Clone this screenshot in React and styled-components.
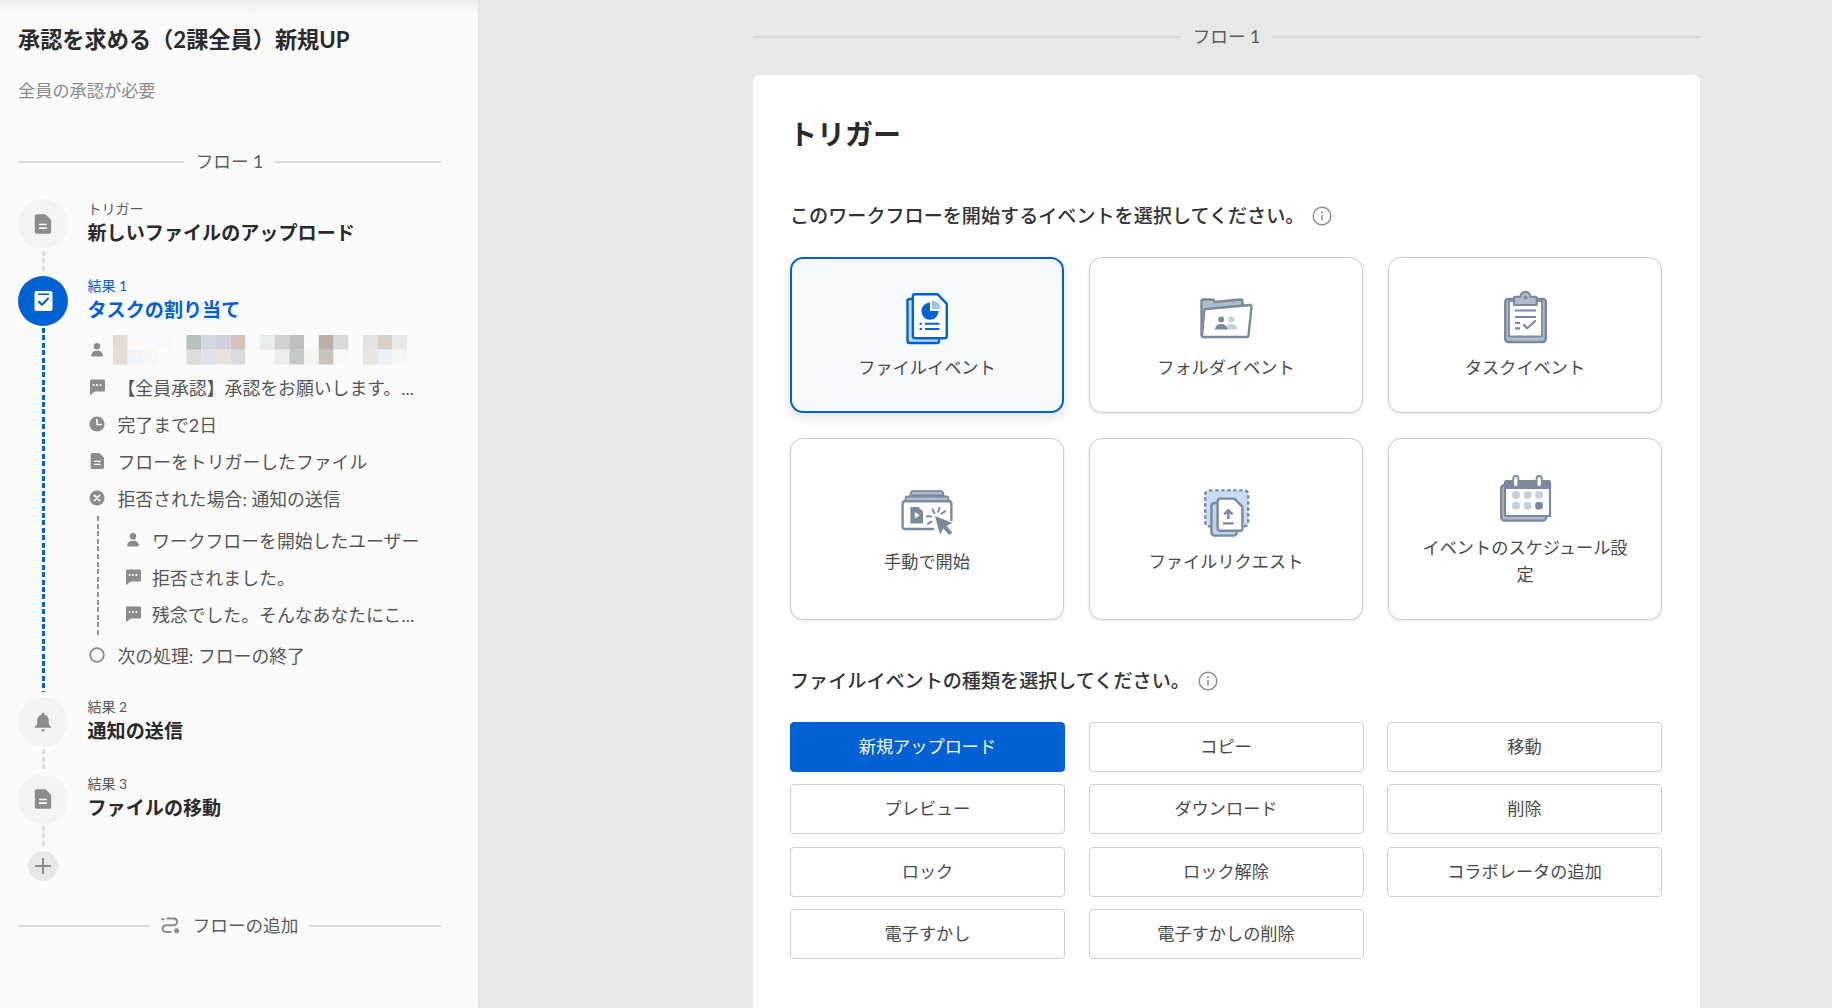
import React from "react";
import styled, { createGlobalStyle, css } from "styled-components";

const FONT = `Lato, "Noto Sans CJK JP", "Noto Sans", sans-serif`;
const BLUE = "#0061d5";
const SLATE = "#7a8a9c";
const MIST = "#c4d0dc";
const GREY = "#8c8c8c";

const Global = createGlobalStyle`
  html, body { margin: 0; height: 100%; overflow: hidden; background: #e8e8e8; }
  #root { height: 100%; }
  * { box-sizing: border-box; }
  body { font-family: ${FONT}; color: #4a4a4a; }
`;

const Page = styled.div`
  display: flex;
  width: 1832px;
  height: 1008px;
  overflow: hidden;
`;

const Sidebar = styled.aside`
  width: 478px;
  flex: none;
  padding: 25px 37px 0 18px;
  background: linear-gradient(#eeeeee 0, #fbfbfb 16px);
  box-shadow: 1px 0 2px rgba(0, 0, 0, 0.04);
`;

const Title = styled.h1`
  margin: 0;
  font-size: 22.2px;
  line-height: 30px;
  font-weight: 700;
  color: #2a2a2a;
  white-space: nowrap;
`;

const Subtitle = styled.p`
  margin: 24px 0 0;
  font-size: 17.2px;
  line-height: 24px;
  color: #8a8a8a;
`;

const Divider = styled.div`
  display: flex;
  align-items: center;
  gap: ${(p) => p.$gap || 12}px;
  height: 24px;
  font-size: 17.6px;
  line-height: 24px;
  color: #5a5a5a;
  white-space: nowrap;
  &::before, &::after {
    content: "";
    flex: 1;
    height: 2px;
    background: ${(p) => p.$line || "#dddddd"};
  }
`;

const SideDivider = styled(Divider)`
  margin: 47px 0 25px;
`;

const AddDivider = styled(Divider)`
  margin-top: 33px;
`;

const AddLabel = styled.span`
  display: inline-flex;
  align-items: center;
  gap: 13px;
`;

const Step = styled.div`
  display: flex;
  align-items: center;
  gap: 19.5px;
  height: 50px;
`;

const Circle = styled.div`
  width: 50px;
  height: 50px;
  flex: none;
  border-radius: 50%;
  display: flex;
  align-items: center;
  justify-content: center;
  background: ${(p) => (p.$active ? BLUE : "#f4f4f4")};
`;

const StepText = styled.div`
  display: flex;
  flex-direction: column;
  margin-top: -2px;
`;

const StepLabel = styled.span`
  font-size: 14px;
  line-height: 20px;
  color: ${(p) => (p.$active ? BLUE : "#5a5a5a")};
`;

const StepTitle = styled.span`
  font-size: 19.1px;
  line-height: 28px;
  font-weight: 700;
  color: ${(p) => (p.$active ? BLUE : "#2a2a2a")};
  white-space: nowrap;
`;

const Connector = styled.div`
  width: 3px;
  height: 27px;
  margin-left: 23.5px;
  padding: 2px 0 5px;
  &::before {
    content: "";
    display: block;
    height: 100%;
    background: repeating-linear-gradient(#dedede 0 5px, transparent 5px 7.5px);
  }
`;

const Expanded = styled.div`
  display: flex;
  height: 371px;
`;

const BlueRail = styled.div`
  width: 3px;
  flex: none;
  margin: 2px 0 5px 23.5px;
  background: repeating-linear-gradient(${BLUE} 0 5px, transparent 5px 7.4px);
`;

const Details = styled.div`
  flex: 1;
  min-width: 0;
  margin: 5px 0 0 43.5px;
`;

const Row = styled.div`
  display: flex;
  align-items: center;
  gap: 11.5px;
  height: 37.2px;
  font-size: 17.85px;
  color: #555555;
  white-space: nowrap;
`;

const RowIcon = styled.span`
  width: 18px;
  height: 18px;
  flex: none;
  display: flex;
`;

const Branch = styled.div`
  display: flex;
  margin: 4px 0;
`;

const GreyRail = styled.div`
  width: 2px;
  flex: none;
  margin: -5px 0 -4px 8.5px;
  background: repeating-linear-gradient(#8f8f8f 0 5px, transparent 5px 7.6px);
`;

const BranchRows = styled.div`
  margin-left: 25px;
  & > div { gap: 10.5px; }
`;

const Mosaic = styled.svg`
  display: block;
  margin-left: -5px;
`;

const AddCircle = styled.div`
  width: 30px;
  height: 30px;
  margin-left: 10px;
  border-radius: 50%;
  background: #e8e8e8;
  display: flex;
  align-items: center;
  justify-content: center;
`;

const Main = styled.main`
  flex: 1;
  padding: 25px 0 0 275px;
  min-width: 0;
`;

const Column = styled.div`
  width: 947px;
`;

const PanelCard = styled.section`
  margin-top: 26px;
  background: #ffffff;
  border-radius: 6px;
  padding: 39px 37px 60px;
  height: 1000px;
`;

const Heading = styled.h2`
  margin: 0 0 0 -1px;
  font-size: 28px;
  line-height: 40px;
  font-weight: 700;
  color: #2a2a2a;
`;

const Prompt = styled.h3`
  margin: ${(p) => p.$top}px 0 ${(p) => p.$bottom}px;
  display: flex;
  align-items: center;
  gap: 8px;
  height: 28px;
  font-size: 19.1px;
  line-height: 28px;
  font-weight: 500;
  color: #333333;
  white-space: nowrap;
`;

const CardGrid = styled.div`
  display: grid;
  grid-template-columns: repeat(3, 274px);
  grid-template-rows: 156px auto;
  column-gap: 25px;
  row-gap: 25px;
`;

const EventCard = styled.div`
  display: flex;
  flex-direction: column;
  align-items: center;
  justify-content: center;
  padding: 31px 28px;
  border-radius: 13px;
  font-size: 17.2px;
  line-height: 27px;
  text-align: center;
  color: #4a4a4a;
  background: #ffffff;
  border: 1px solid #cccccc;
  box-shadow: 0 1px 3px rgba(0, 0, 0, 0.1);
  ${(p) =>
    p.$selected &&
    css`
      padding: 30px 27px;
      background: #f7fafd;
      border: 2px solid ${BLUE};
      box-shadow: 0 4px 12px rgba(0, 0, 0, 0.12);
    `}
`;

const CardIcon = styled.svg`
  display: block;
  flex: none;
  margin-bottom: 8px;
`;

const ButtonGrid = styled.div`
  display: grid;
  grid-template-columns: repeat(3, 275px);
  column-gap: 23.5px;
  row-gap: 12.3px;
`;

const TypeButton = styled.button`
  height: 50px;
  padding: 0 0 3px;
  border-radius: 4px;
  font-family: ${FONT};
  font-size: 17.2px;
  color: ${(p) => (p.$selected ? "#ffffff" : "#4a4a4a")};
  background: ${(p) => (p.$selected ? BLUE : "#ffffff")};
  border: 1px solid ${(p) => (p.$selected ? BLUE : "#cfcfcf")};
`;

/* ---------- small glyphs ---------- */

const PersonIcon = () => (
  <svg width="18" height="18" viewBox="0 0 18 18" fill={GREY}>
    <circle cx="9" cy="5.3" r="3.2" />
    <path d="M3.2 15c0-3.4 2.2-5.2 5.8-5.2s5.8 1.8 5.8 5.2c0 .3-.2.5-.5.5H3.7c-.3 0-.5-.2-.5-.5z" />
  </svg>
);

const ChatIcon = () => (
  <svg width="18" height="18" viewBox="0 0 18 18">
    <path fill={GREY} d="M2.6 1.5h12.8c1 0 1.6.6 1.6 1.6v8.8c0 1-.6 1.6-1.6 1.6H6.8L3 16.6c-.5.4-1 .2-1-.4V3.1c0-1 .6-1.6 1.6-1.6z" />
    <circle cx="5.6" cy="7" r="1.1" fill="#fbfbfb" />
    <circle cx="9" cy="7" r="1.1" fill="#fbfbfb" />
    <circle cx="12.4" cy="7" r="1.1" fill="#fbfbfb" />
  </svg>
);

const ClockIcon = () => (
  <svg width="18" height="18" viewBox="0 0 18 18">
    <circle cx="9" cy="9" r="7.6" fill={GREY} />
    <path d="M9 4.6V9.5H13" fill="none" stroke="#fbfbfb" strokeWidth="1.7" strokeLinecap="round" />
  </svg>
);

const FileGlyph = ({ size = 18, color = GREY, hole = "#fbfbfb" }) => (
  <svg width={size * 0.82} height={size} viewBox="0 0 15 18" style={{ margin: "0 auto" }}>
    <path fill={color} d="M2.4.8h6.4c.5 0 .9.2 1.2.5l3.8 3.9c.3.3.5.7.5 1.2v9c0 1-.7 1.8-1.7 1.8H2.4c-1 0-1.7-.8-1.7-1.8V2.6C.7 1.6 1.4.8 2.4.8z" />
    <path d="M4.2 9.4h6.6M4.2 12.4h6.6" stroke={hole} strokeWidth="1.4" />
  </svg>
);

const RejectIcon = () => (
  <svg width="18" height="18" viewBox="0 0 18 18">
    <circle cx="9" cy="9" r="7.6" fill={GREY} />
    <path d="M6.4 6.4l5.2 5.2M11.6 6.4l-5.2 5.2" stroke="#fbfbfb" strokeWidth="1.7" strokeLinecap="round" />
  </svg>
);

const RingIcon = () => (
  <svg width="18" height="18" viewBox="0 0 18 18">
    <circle cx="9" cy="9" r="6.8" fill="none" stroke={GREY} strokeWidth="1.8" />
  </svg>
);

const BellIcon = () => (
  <svg width="18" height="20" viewBox="0 0 18 20" fill={GREY}>
    <path d="M9 .8c.9 0 1.5.6 1.5 1.4v.6c2.9.7 4.3 3 4.3 6v3.4l2.2 2.5c.4.5.1 1.1-.5 1.1H1.5c-.6 0-.9-.6-.5-1.1l2.2-2.5V8.8c0-3 1.4-5.3 4.3-6v-.6C7.5 1.4 8.1.8 9 .8z" />
    <path d="M7 17.4h4c0 1-.9 1.8-2 1.8s-2-.8-2-1.8z" />
  </svg>
);

const TaskIcon = () => (
  <svg width="19" height="20" viewBox="0 0 19 20">
    <rect x="0.5" y="0" width="18" height="20" rx="2" fill="#ffffff" />
    <rect x="4" y="2.4" width="11" height="1.6" fill={BLUE} />
    <path d="M5 10.8l3 3 6-6.2" fill="none" stroke={BLUE} strokeWidth="2.2" strokeLinecap="round" strokeLinejoin="round" />
  </svg>
);

const PlusIcon = () => (
  <svg width="16" height="16" viewBox="0 0 16 16">
    <path d="M8 .8v14.4M.8 8h14.4" stroke={GREY} strokeWidth="2" strokeLinecap="round" />
  </svg>
);

const FlowAddIcon = () => (
  <svg width="19" height="18" viewBox="0 0 19 18" fill="none">
    <path d="M1 2.2h1.5" stroke={GREY} strokeWidth="2" strokeLinecap="round" />
    <path d="M6.5 1.6h6.2c2 0 3.4 1.4 3.4 3.2s-1.4 3.4-3.4 3.4H5.5c-2.2 0-3.9 1.4-3.9 3.3s1.6 3.4 3.9 3.4h4.2" stroke={GREY} strokeWidth="2" strokeLinecap="round" />
    <circle cx="15.6" cy="13.8" r="2.5" fill={GREY} />
  </svg>
);

const InfoIcon = () => (
  <svg width="20" height="20" viewBox="0 0 20 20" fill="none">
    <circle cx="10" cy="10" r="8.8" stroke="#8c8c8c" strokeWidth="1.4" />
    <circle cx="10" cy="6.2" r="1" fill="#8c8c8c" />
    <path d="M10 9v5.6" stroke="#8c8c8c" strokeWidth="1.5" />
  </svg>
);

const CELLS = [
  [7, "#e3dbd6", "#e5dcd7"], [8, "#fcfaf8", "#f0f5fa"], [9, "#f8fafd", "#faf6f3"], [10, "#fcf8f5", null],
  [12, "#b9c0bf", "#dcdcdb"], [13, "#d3d7df", "#e2e0ea"], [14, "#cfcfdd", "#e9e1dd"], [15, "#d5c3bb", "#dadade"],
  [16, "#fafbfd", null], [17, "#ebeded", null], [18, "#d3d1cf", "#eaecee"], [19, "#bdbfc1", "#c6c8c8"],
  [20, "#fafbfb", "#f4f5f2"], [21, "#baafa7", "#c8c3bd"], [22, "#d6dadd", "#f7f9fb"],
  [24, "#e5e3df", "#e7e5e1"], [25, "#d8d0c8", "#ecf0f4"], [26, "#e8e9ea", "#f6f6f6"],
];

const PeopleMosaic = () => (
  <Mosaic width="300" height="30" viewBox="0 0 300 30">
    {CELLS.map(([c, a, b]) => (
      <g key={c}>
        <rect x={(c - 7) * 14.7} y="0" width="14.8" height="14.8" fill={a} />
        {b && <rect x={(c - 7) * 14.7} y="14.7" width="14.8" height="14.8" fill={b} />}
      </g>
    ))}
  </Mosaic>
);

/* ---------- card pictures, 56 x 56 ---------- */

const Picture = ({ children }) => (
  <CardIcon width="56" height="56" viewBox="0 0 56 56" fill="none">{children}</CardIcon>
);

const FileEventPic = () => (
  <Picture>
    <path d="M10.5 9H38a2 2 0 0 1 2 2v40a2 2 0 0 1-2 2H10.5a2 2 0 0 1-2-2V11a2 2 0 0 1 2-2z" fill="#c5dcf7" stroke={BLUE} strokeWidth="2.4" />
    <path d="M16 4.2h22.5l9.3 9.6V46a2.2 2.2 0 0 1-2.2 2.2H16a2.2 2.2 0 0 1-2.2-2.2V6.4A2.2 2.2 0 0 1 16 4.2z" fill="#ffffff" stroke={BLUE} strokeWidth="2.4" strokeLinejoin="round" />
    <path d="M31 12.5v8.6h8.6A8.6 8.6 0 1 1 31 12.5z" fill={BLUE} />
    <path d="M33 10.4a8.6 8.6 0 0 1 8.6 8.6H33z" fill="#9cc2f0" />
    <path d="M26 33.8h14.4M26 39h14.4" stroke={BLUE} strokeWidth="2" />
    <path d="M20.6 33.8h2.2M20.6 39h2.2" stroke={BLUE} strokeWidth="2" />
  </Picture>
);

const FolderEventPic = () => (
  <Picture>
    <path d="M5 9.5h9.5c.8 0 1.4.5 1.6 1.2l.4 1.3 26-2.5c1-.1 1.7.5 1.8 1.4l.5 5L8 47H5.5A2 2 0 0 1 3.5 45V11a1.5 1.5 0 0 1 1.5-1.5z" fill="#aebccb" stroke={SLATE} strokeWidth="2.4" strokeLinejoin="round" />
    <path d="M8 19l44-4c1 0 1.6.7 1.5 1.6l-3 28.7c-.1 1-.9 1.7-1.9 1.7H5.6c-1 0-1.7-.6-1.6-1.6l2.3-24.7c.1-1 .8-1.6 1.7-1.7z" fill="#ffffff" stroke={SLATE} strokeWidth="2.4" strokeLinejoin="round" />
    <circle cx="33.2" cy="29.6" r="3" fill={MIST} />
    <path d="M27 39.4c.5-3.8 3-5.4 6.2-5.4s5.7 1.6 6.2 5.4z" fill={MIST} />
    <circle cx="23.2" cy="29.6" r="3" fill={SLATE} />
    <path d="M17 39.4c.5-3.8 3-5.4 6.2-5.4s5.7 1.6 6.2 5.4z" fill={SLATE} />
  </Picture>
);

const TaskEventPic = () => (
  <Picture>
    <rect x="8.2" y="9" width="40.6" height="43" rx="3" fill="#aebccb" stroke={SLATE} strokeWidth="2.4" />
    <rect x="12" y="11" width="33" height="35.4" fill="#ffffff" stroke={SLATE} strokeWidth="1.8" />
    <path d="M17 8.2c0-.9.6-1.4 1.4-1.4h5a5 5 0 0 1 10 0h5c.8 0 1.4.5 1.4 1.4V15H17z" fill="#aebccb" stroke={SLATE} strokeWidth="2.2" strokeLinejoin="round" />
    <circle cx="28.5" cy="7.6" r="2" fill={SLATE} />
    <path d="M18 20.4h21M18 27h21" stroke={SLATE} strokeWidth="2" />
    <path d="M18 33h5M18 38.4h5" stroke={SLATE} strokeWidth="2.2" />
    <path d="M27 35l3.2 3.2L38 31" stroke={SLATE} strokeWidth="2.2" strokeLinecap="round" strokeLinejoin="round" />
  </Picture>
);

const ManualPic = () => (
  <Picture>
    <path d="M11.5 11.5l.6-3c.2-.9.8-1.4 1.6-1.4h28.6c.8 0 1.4.5 1.6 1.4l.6 3z" fill="#aebccb" stroke={SLATE} strokeWidth="1.8" />
    <path d="M6.5 17.5v-3.2c0-1 .7-1.8 1.7-1.8h39.6c1 0 1.7.8 1.7 1.8v3.2z" fill="#aebccb" stroke={SLATE} strokeWidth="1.8" />
    <path d="M34 45H6a2.4 2.4 0 0 1-2.4-2.4V19.6A2.4 2.4 0 0 1 6 17.2h44a2.4 2.4 0 0 1 2.4 2.4V36" fill="#ffffff" />
    <path d="M34 45H6a2.4 2.4 0 0 1-2.4-2.4V19.6A2.4 2.4 0 0 1 6 17.2h44a2.4 2.4 0 0 1 2.4 2.4V36" stroke={SLATE} strokeWidth="2.4" strokeLinecap="round" />
    <path d="M11.4 23h8l4.6 4.6v11.8H11.4z" fill={SLATE} />
    <path d="M15.8 28v6.4l5-3.2z" fill="#ffffff" />
    <path d="M36 32l17.4 7-6 3 6 6.4-3.2 2.6-5.8-6.6-3.4 6z" fill={SLATE} />
    <path d="M33.6 25.6l1.8 3.4M40.4 24l-1.2 3.8M46 27.2l-3.4 2.4M27.8 32.2l4 .4M29 39.8l3.4-2.2" stroke={SLATE} strokeWidth="2" strokeLinecap="round" />
  </Picture>
);

const RequestPic = () => (
  <Picture>
    <rect x="7.2" y="6.4" width="43" height="36" rx="4" fill="#c8dcf5" />
    <rect x="7.2" y="6.4" width="43" height="36" rx="4" stroke={SLATE} strokeWidth="2.4" strokeDasharray="3.4 2.6" />
    <rect x="13.4" y="19" width="25.4" height="32.6" rx="3" fill="#bcd2ee" stroke={SLATE} strokeWidth="2.4" />
    <path d="M22 14.6h14.4l8 8.2v21.6a2.4 2.4 0 0 1-2.4 2.4H22a2.4 2.4 0 0 1-2.4-2.4V17a2.4 2.4 0 0 1 2.4-2.4z" fill="#ffffff" stroke={SLATE} strokeWidth="2.4" strokeLinejoin="round" />
    <path d="M30.4 35V26.6M26.2 30.4l4.2-4.2 4.2 4.2" stroke={SLATE} strokeWidth="2.4" />
    <path d="M25 39.4h10.8" stroke={SLATE} strokeWidth="2.2" />
  </Picture>
);

const SchedulePic = () => (
  <Picture>
    <rect x="4.2" y="15" width="45" height="35.6" rx="3.4" fill="#aebccb" stroke={SLATE} strokeWidth="2.4" />
    <path d="M9.6 11h41.8c.9 0 1.6.7 1.6 1.6V46H9.6A1.6 1.6 0 0 1 8 44.4V12.6c0-.9.7-1.6 1.6-1.6z" fill="#ffffff" stroke={SLATE} strokeWidth="2.2" />
    <path d="M9.6 10h41.8c.9 0 1.6.7 1.6 1.6V19H8v-7.4c0-.9.7-1.6 1.6-1.6z" fill={SLATE} />
    <rect x="16.2" y="6" width="5.2" height="11" rx="2.6" fill="#ffffff" stroke={SLATE} strokeWidth="1.8" />
    <rect x="39.6" y="6" width="5.2" height="11" rx="2.6" fill="#ffffff" stroke={SLATE} strokeWidth="1.8" />
    {[19, 30.7, 42].map((x) =>
      [25, 35.7].map((y) => (
        <rect key={`${x}-${y}`} x={x - 3.8} y={y - 3.8} width="7.6" height="7.6" rx="2.8" fill={x === 42 && y === 35.7 ? SLATE : MIST} />
      ))
    )}
  </Picture>
);

const CARDS = [
  { label: "ファイルイベント", Pic: FileEventPic, selected: true },
  { label: "フォルダイベント", Pic: FolderEventPic },
  { label: "タスクイベント", Pic: TaskEventPic },
  { label: "手動で開始", Pic: ManualPic },
  { label: "ファイルリクエスト", Pic: RequestPic },
  { label: "イベントのスケジュール設定", Pic: SchedulePic },
];

const BUTTONS = [
  "新規アップロード", "コピー", "移動", "プレビュー", "ダウンロード", "削除",
  "ロック", "ロック解除", "コラボレータの追加", "電子すかし", "電子すかしの削除",
];

const StepItem = ({ icon, label, title, active }) => (
  <Step>
    <Circle $active={active}>{icon}</Circle>
    <StepText>
      <StepLabel $active={active}>{label}</StepLabel>
      <StepTitle $active={active}>{title}</StepTitle>
    </StepText>
  </Step>
);

const Detail = ({ icon, children }) => (
  <Row>
    <RowIcon>{icon}</RowIcon>
    {children}
  </Row>
);

export default function App() {
  return (
    <Page>
      <Global />
      <Sidebar>
        <Title>承認を求める（2課全員）新規UP</Title>
        <Subtitle>全員の承認が必要</Subtitle>
        <SideDivider $line="#dadada">フロー 1</SideDivider>

        <StepItem icon={<FileGlyph size={22} />} label="トリガー" title="新しいファイルのアップロード" />
        <Connector />
        <StepItem active icon={<TaskIcon />} label="結果 1" title="タスクの割り当て" />
        <Expanded>
          <BlueRail />
          <Details>
            <Detail icon={<PersonIcon />}><PeopleMosaic /></Detail>
            <Detail icon={<ChatIcon />}>【全員承認】承認をお願いします。...</Detail>
            <Detail icon={<ClockIcon />}>完了まで2日</Detail>
            <Detail icon={<FileGlyph />}>フローをトリガーしたファイル</Detail>
            <Detail icon={<RejectIcon />}>拒否された場合: 通知の送信</Detail>
            <Branch>
              <GreyRail />
              <BranchRows>
                <Detail icon={<PersonIcon />}>ワークフローを開始したユーザー</Detail>
                <Detail icon={<ChatIcon />}>拒否されました。</Detail>
                <Detail icon={<ChatIcon />}>残念でした。そんなあなたにこ...</Detail>
              </BranchRows>
            </Branch>
            <Detail icon={<RingIcon />}>次の処理: フローの終了</Detail>
          </Details>
        </Expanded>
        <StepItem icon={<BellIcon />} label="結果 2" title="通知の送信" />
        <Connector />
        <StepItem icon={<FileGlyph size={22} />} label="結果 3" title="ファイルの移動" />
        <Connector />
        <AddCircle><PlusIcon /></AddCircle>
        <AddDivider $gap={11} $line="#dadada">
          <AddLabel><FlowAddIcon />フローの追加</AddLabel>
        </AddDivider>
      </Sidebar>

      <Main>
        <Column>
          <Divider $line="#d6d6d6">フロー 1</Divider>
          <PanelCard>
            <Heading>トリガー</Heading>
            <Prompt $top={48} $bottom={27}>
              このワークフローを開始するイベントを選択してください。<InfoIcon />
            </Prompt>
            <CardGrid>
              {CARDS.map(({ label, Pic, selected }) => (
                <EventCard key={label} $selected={selected}>
                  <Pic />
                  {label}
                </EventCard>
              ))}
            </CardGrid>
            <Prompt $top={47} $bottom={27}>
              ファイルイベントの種類を選択してください。<InfoIcon />
            </Prompt>
            <ButtonGrid>
              {BUTTONS.map((b, i) => (
                <TypeButton key={b} $selected={i === 0}>{b}</TypeButton>
              ))}
            </ButtonGrid>
          </PanelCard>
        </Column>
      </Main>
    </Page>
  );
}
